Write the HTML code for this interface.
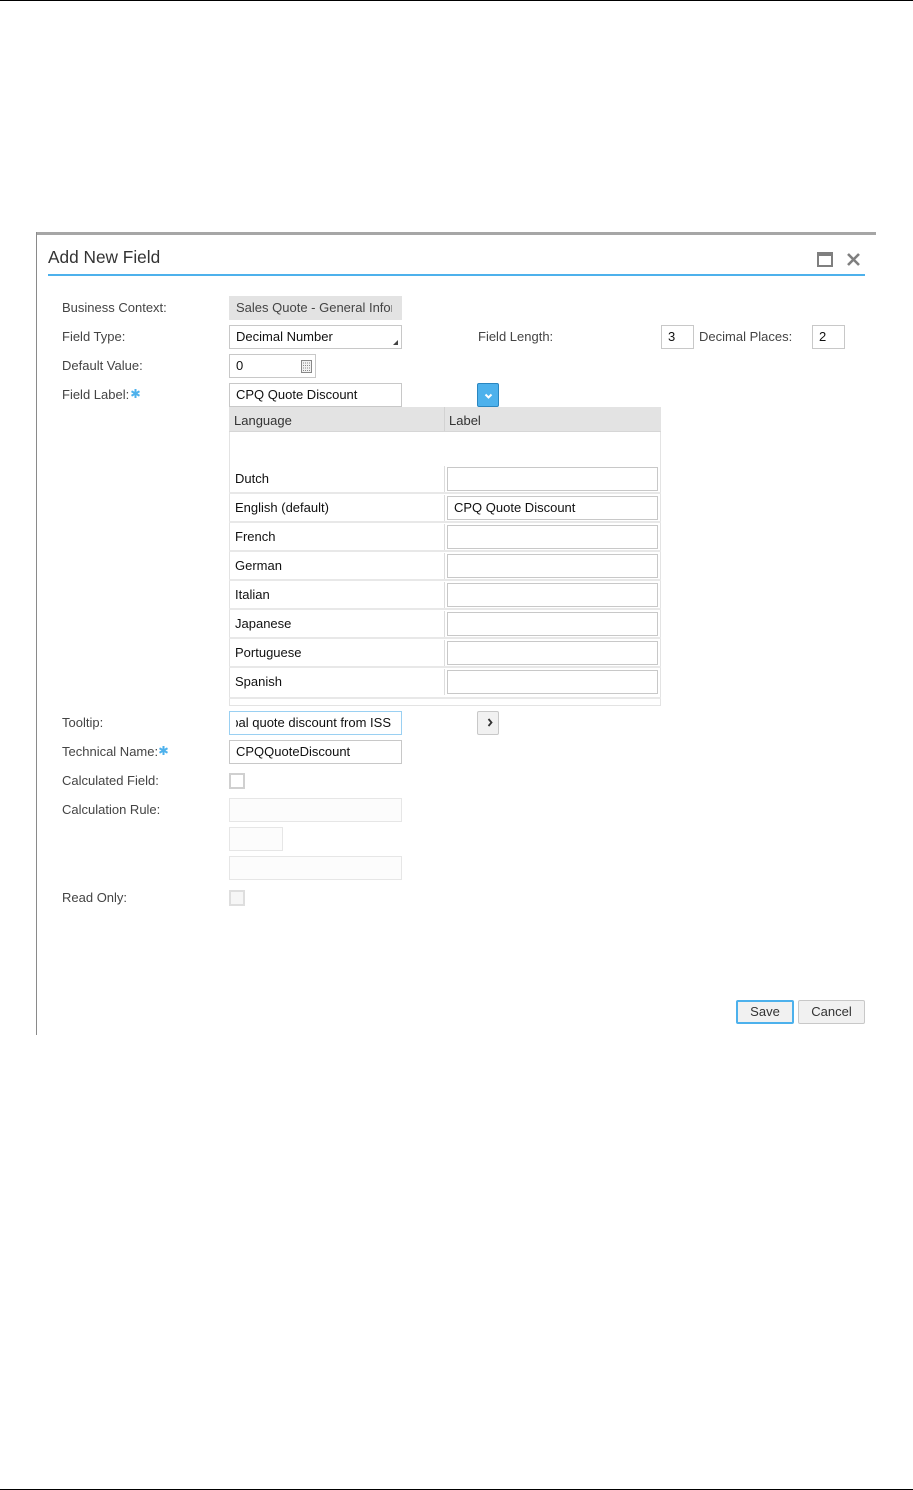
<!DOCTYPE html>
<html><head><meta charset="utf-8"><style>
html,body{margin:0;padding:0;background:#fff;width:913px;height:1490px;overflow:hidden}
body{position:relative;font-family:"Liberation Sans",Arial,sans-serif;font-size:13px;color:#111}
div,svg{position:absolute}
#w{left:0;top:0;width:913px;height:1490px;filter:blur(.35px)}
.l{color:#444;left:62px;height:16px;line-height:16px;white-space:nowrap;margin-top:1px}
.t{color:#111;height:16px;line-height:16px;white-space:nowrap;margin-top:1px}
.i{box-sizing:border-box;border:1px solid #c8c8c8;background:#fff;height:24px;line-height:22px;padding-left:6px;color:#111;white-space:nowrap;overflow:hidden}
.d{border-color:#e6e6e6;background:#fcfcfc}
.h{background:#e8e8e8;left:229px;width:432px;height:2px}
.v{left:444px;width:1px;height:26px;background:#ddd}
.b{box-sizing:border-box;background:#f1f1f1;border:1px solid #c8c8c8;border-radius:2px;text-align:center;color:#333;height:24px;line-height:22px}
</style></head><body>
<div style="left:0;top:0;width:913px;height:1px;background:#000"></div>
<div style="left:0;top:1489px;width:913px;height:1px;background:#000"></div>
<div id="w">
<div style="left:36px;top:232px;width:840px;height:3px;background:#a6a6a6"></div>
<div style="left:36px;top:232px;width:1px;height:803px;background:#8a8a8a"></div>

<div style="left:48px;top:246px;font-size:17.25px;line-height:22px;color:#333;white-space:nowrap">Add New Field</div>
<div style="left:48px;top:274px;width:817px;height:2px;background:#4db1ec"></div>
<svg style="left:815px;top:249px" width="47" height="20" viewBox="0 0 47 20"><rect x="3" y="4" width="14" height="13" fill="none" stroke="#7f7f7f" stroke-width="2"/><rect x="3" y="3" width="14" height="4" fill="#7f7f7f"/><path d="M33 5l11 11M44 5L33 16" stroke="#7f7f7f" stroke-width="2.600" fill="none"/></svg>

<div class="l" style="top:299px">Business Context:</div>
<div class="l" style="top:328px">Field Type:</div>
<div class="l" style="top:357px">Default Value:</div>
<div class="l" style="top:386px">Field Label:</div>
<svg style="left:130px;top:388px" width="11" height="11" viewBox="0 0 11 11"><path d="M5.500 1v9M1.500 3.200l8 4.600M9.500 3.200l-8 4.600" stroke="#4db1ec" stroke-width="2"/></svg>
<div class="l" style="top:714px">Tooltip:</div>
<div class="l" style="top:743px">Technical Name:</div>
<svg style="left:158px;top:745px" width="11" height="11" viewBox="0 0 11 11"><path d="M5.500 1v9M1.500 3.200l8 4.600M9.500 3.200l-8 4.600" stroke="#4db1ec" stroke-width="2"/></svg>
<div class="l" style="top:772px">Calculated Field:</div>
<div class="l" style="top:801px">Calculation Rule:</div>
<div class="l" style="top:889px">Read Only:</div>
<div class="l" style="left:478px;top:328px">Field Length:</div>
<div class="l" style="left:699px;top:328px">Decimal Places:</div>

<div class="i" style="left:229px;top:296px;width:173px;background:#e3e3e3;border-color:#e3e3e3;color:#444"></div>
<div class="t" style="left:236px;top:299px;width:156px;overflow:hidden;color:#444">Sales Quote - General Information</div>
<div class="i" style="left:229px;top:325px;width:173px">Decimal Number</div>
<svg style="left:392px;top:339px" width="7" height="7" viewBox="0 0 7 7"><path d="M6 1v5H1z" fill="#444"/></svg>
<div class="i" style="left:229px;top:354px;width:87px">0</div>
<svg style="left:301px;top:360px" width="11" height="13" viewBox="0 0 11 13"><rect x=".5" y=".5" width="10" height="12" fill="#f2f2f2" stroke="#888"/><path d="M2 3h7M2 5.500h7M2 8h7M2 10.500h7" stroke="#888" stroke-dasharray="1 1"/></svg>
<div class="i" style="left:229px;top:383px;width:173px">CPQ Quote Discount</div>
<div class="b" style="left:477px;top:383px;width:22px;background:#4db1ec;border-color:#2a86c0"></div>
<svg style="left:484px;top:393px" width="9" height="7" viewBox="0 0 9 7"><path d="M1.500 1.500L4.500 4.500L7.500 1.500" fill="none" stroke="#fff" stroke-width="2"/></svg>
<div class="i" style="left:661px;top:325px;width:33px">3</div>
<div class="i" style="left:812px;top:325px;width:33px">2</div>

<div style="box-sizing:border-box;left:229px;top:407px;width:432px;height:299px;border:1px solid #e3e3e3;background:#fff"></div>
<div style="left:229px;top:407px;width:432px;height:25px;background:#e3e3e3;border-bottom:1px solid #d6d6d6;box-sizing:border-box"></div>
<div style="left:444px;top:407px;width:1px;height:24px;background:#d2d2d2"></div>
<div class="t" style="left:234px;top:412px;color:#333">Language</div>
<div class="t" style="left:449px;top:412px;color:#333">Label</div>

<div class="t" style="left:235px;top:470px">Dutch</div>
<div class="v" style="top:466px"></div>
<div class="i" style="left:447px;top:467px;width:211px"></div>
<div class="h" style="top:492px"></div>
<div class="t" style="left:235px;top:499px">English (default)</div>
<div class="v" style="top:495px"></div>
<div class="i" style="left:447px;top:496px;width:211px">CPQ Quote Discount</div>
<div class="h" style="top:521px"></div>
<div class="t" style="left:235px;top:528px">French</div>
<div class="v" style="top:524px"></div>
<div class="i" style="left:447px;top:525px;width:211px"></div>
<div class="h" style="top:550px"></div>
<div class="t" style="left:235px;top:557px">German</div>
<div class="v" style="top:553px"></div>
<div class="i" style="left:447px;top:554px;width:211px"></div>
<div class="h" style="top:579px"></div>
<div class="t" style="left:235px;top:586px">Italian</div>
<div class="v" style="top:582px"></div>
<div class="i" style="left:447px;top:583px;width:211px"></div>
<div class="h" style="top:608px"></div>
<div class="t" style="left:235px;top:615px">Japanese</div>
<div class="v" style="top:611px"></div>
<div class="i" style="left:447px;top:612px;width:211px"></div>
<div class="h" style="top:637px"></div>
<div class="t" style="left:235px;top:644px">Portuguese</div>
<div class="v" style="top:640px"></div>
<div class="i" style="left:447px;top:641px;width:211px"></div>
<div class="h" style="top:666px"></div>
<div class="t" style="left:235px;top:673px">Spanish</div>
<div class="v" style="top:669px"></div>
<div class="i" style="left:447px;top:670px;width:211px"></div>
<div class="h" style="top:697px"></div>

<div class="i" style="left:229px;top:711px;width:173px;border-color:#9ad0f2"></div>
<div class="t" style="left:236px;top:714px;width:155px;overflow:hidden;text-align:right;direction:rtl"><span style="direction:ltr;unicode-bidi:bidi-override">global quote discount from ISS</span></div>
<div class="b" style="left:477px;top:711px;width:22px"></div>
<svg style="left:487px;top:718px" width="7" height="9" viewBox="0 0 7 9"><path d="M1.500 1L4.500 4.500L1.500 8" fill="none" stroke="#333" stroke-width="1.800"/></svg>
<div class="i" style="left:229px;top:740px;width:173px">CPQQuoteDiscount</div>
<div class="i" style="left:229px;top:773px;width:16px;height:16px;border:2px solid #d0d0d0;padding:0"></div>
<div class="i d" style="left:229px;top:798px;width:173px"></div>
<div class="i d" style="left:229px;top:827px;width:54px"></div>
<div class="i d" style="left:229px;top:856px;width:173px"></div>
<div class="i" style="left:229px;top:890px;width:16px;height:16px;border:2px solid #dedede;background:#f6f6f6;padding:0"></div>

<div class="b" style="left:736px;top:1000px;width:58px;border:2px solid #4db1ec;line-height:20px">Save</div>
<div class="b" style="left:798px;top:1000px;width:67px">Cancel</div>
</div>
</body></html>
